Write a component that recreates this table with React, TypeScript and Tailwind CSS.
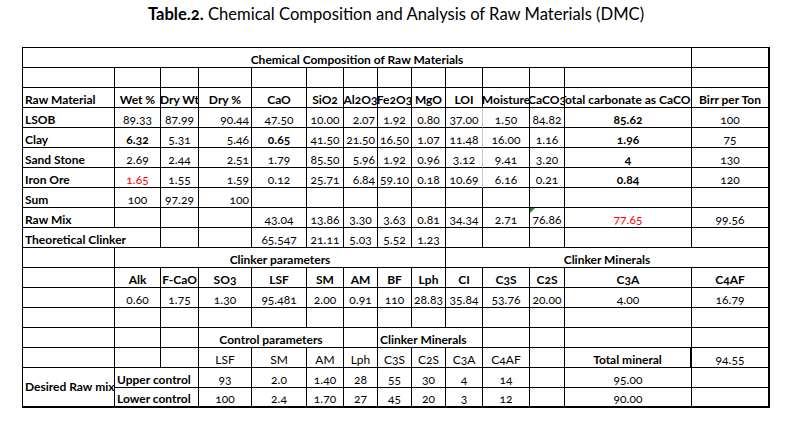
type Cell = {
  t?: string;
  s?: number;
  r?: number;
  a?: 'l' | 'c' | 'r';
  b?: boolean;
  red?: boolean;
  tri?: boolean;
  gray?: boolean;
  thick?: boolean;
};

const SPAN: Record<number, string> = {
  1: '',
  2: 'col-span-2',
  3: 'col-span-3',
  5: 'col-span-5',
  8: 'col-span-8',
  13: 'col-span-13',
};

const E = (n: number): Cell[] => Array.from({ length: n }, () => ({}));
const H = (list: string[]): Cell[] => list.map((t) => ({ t, b: true }));

// alignment used by the raw material rows (Dry % and Al2O3 are right aligned)
const dataRow = (label: string, vals: (string | Cell)[]): Cell[] => [
  { t: label, a: 'l', b: true },
  ...vals.map((v, i) => {
    const c: Cell = typeof v === 'string' ? { t: v } : v;
    if (i === 2 || i === 5) c.a = 'r';
    if (i === 8) c.gray = true;
    return c;
  }),
];

const rows: Cell[][] = [
  [{ t: 'Chemical Composition of Raw Materials', s: 13, b: true }, {}],
  E(14),
  [
    { t: 'Raw Material', a: 'l', b: true },
    ...H(['Wet %', 'Dry Wt', 'Dry %', 'CaO', 'SiO2', 'Al2O3', 'Fe2O3', 'MgO', 'LOI', 'Moisture', 'CaCO3', 'Total carbonate as CaCO3', 'Birr per Ton']),
  ],
  dataRow('LSOB', ['89.33', '87.99', '90.44', '47.50', '10.00', '2.07', '1.92', '0.80', '37.00', '1.50', '84.82', { t: '85.62', b: true }, '100']),
  dataRow('Clay', [{ t: '6.32', b: true }, '5.31', '5.46', { t: '0.65', b: true }, '41.50', '21.50', '16.50', '1.07', '11.48', '16.00', '1.16', { t: '1.96', b: true }, '75']),
  dataRow('Sand Stone', ['2.69', '2.44', '2.51', '1.79', '85.50', '5.96', '1.92', '0.96', '3.12', '9.41', '3.20', { t: '4', b: true }, '130']),
  dataRow('Iron Ore', [{ t: '1.65', red: true }, '1.55', '1.59', '0.12', '25.71', '6.84', '59.10', '0.18', '10.69', '6.16', '0.21', { t: '0.84', b: true }, '120']),
  [{ t: 'Sum', a: 'l', b: true }, { t: '100' }, { t: '97.29' }, { t: '100', a: 'r' }, ...E(10)],
  [
    { t: 'Raw Mix', a: 'l', b: true },
    ...E(3),
    { t: '43.04' }, { t: '13.86' }, { t: '3.30' }, { t: '3.63' }, { t: '0.81' }, { t: '34.34' }, { t: '2.71' },
    { t: '76.86', tri: true }, { t: '77.65', red: true }, { t: '99.56' },
  ],
  [
    { t: 'Theoretical Clinker', s: 2, a: 'l', b: true },
    ...E(2),
    { t: '65.547' }, { t: '21.11' }, { t: '5.03' }, { t: '5.52' }, { t: '1.23' },
    ...E(5),
  ],
  [{}, { t: 'Clinker parameters', s: 8, b: true }, { t: 'Clinker Minerals', s: 5, b: true }],
  [{}, ...H(['Alk', 'F-CaO', 'SO3', 'LSF', 'SM', 'AM', 'BF', 'Lph', 'CI', 'C3S', 'C2S', 'C3A', 'C4AF'])],
  [{}, ...['0.60', '1.75', '1.30', '95.481', '2.00', '0.91', '110', '28.83', '35.84', '53.76', '20.00', '4.00', '16.79'].map((t) => ({ t }))],
  E(14),
  [...E(3), { t: 'Control parameters', s: 3, b: true }, {}, { t: 'Clinker Minerals', s: 3, a: 'l', b: true }, ...E(4)],
  [
    ...E(3),
    ...['LSF', 'SM', 'AM', 'Lph', 'C3S', 'C2S', 'C3A', 'C4AF'].map((t) => ({ t })),
    {},
    { t: 'Total mineral', b: true, thick: true },
    { t: '94.55' },
  ],
  [
    { t: 'Desired Raw mix', r: 2, a: 'l', b: true },
    { t: 'Upper control', s: 2, a: 'l', b: true },
    ...['93', '2.0', '1.40', '28', '55', '30', '4', '14'].map((t) => ({ t })),
    {},
    { t: '95.00' },
    {},
  ],
  [
    { t: 'Lower control', s: 2, a: 'l', b: true },
    ...['100', '2.4', '1.70', '27', '45', '20', '3', '12'].map((t) => ({ t })),
    {},
    { t: '90.00' },
    {},
  ],
];

const App = () => {
  const cells: JSX.Element[] = [];
  rows.forEach((row, ri) => {
    let col = ri === 17 ? 2 : 1;
    row.forEach((c, ci) => {
      const s = c.s ?? 1;
      const end = col + s - 1;
      col = end + 1;
      const lastCol = end === 14;
      const lastRow = ri === 17 || (ri === 16 && c.r === 2);
      const align =
        c.a === 'l' ? 'justify-start pl-[2px]' : c.a === 'r' ? 'justify-end pr-[2px]' : 'justify-center';
      const right = lastCol
        ? 'border-r-2 border-r-black'
        : c.thick
          ? 'border-r-2 border-r-black'
          : c.gray
            ? 'border-r border-r-[#c8c8c8]'
            : 'border-r border-r-black';
      const bottom = lastRow ? 'border-b-2 border-b-black' : 'border-b border-b-black';
      cells.push(
        <div
          key={`${ri}-${ci}`}
          className={`relative flex ${c.r === 2 ? 'row-span-2 items-center' : 'items-end pb-[1px]'} ${SPAN[s]} ${align} ${right} ${bottom} whitespace-nowrap ${
            c.b ? 'font-bold text-[12px]' : 'text-[12px]'
          } ${c.red ? 'text-[#ff0000]' : 'text-black'} ${
            c.t && (c.t.startsWith('Total carbonate') || c.t === 'CaCO3' || c.t === 'Moisture') ? 'overflow-hidden' : ''
          }`}
        >
          {c.tri && (
            <span className="absolute left-0 top-0 w-0 h-0 border-t-[5px] border-t-[#1e8a1e] border-r-[5px] border-r-transparent" />
          )}
          {c.t && <span className="leading-none">{c.t}</span>}
        </div>,
      );
    });
  });

  return (
    <div className="w-[809px] h-[423px] bg-white font-['Lato',sans-serif] [font-variant-numeric:oldstyle-nums] text-black">
      <div className="ml-[22px] w-[748px]">
        <h1 className="pt-[3px] h-[26px] text-center text-[16.6px] leading-[22px]">
          <span className="font-bold">Table.2.</span> Chemical Composition and Analysis of Raw Materials (DMC)
        </h1>
        <div className="mt-[21px] grid grid-cols-[92px_46px_38px_53px_55px_37px_34px_34px_34px_37px_47px_35px_127px_78px] auto-rows-[20px] border-l border-t border-black">
          {cells}
        </div>
      </div>
    </div>
  );
};

export default App;
